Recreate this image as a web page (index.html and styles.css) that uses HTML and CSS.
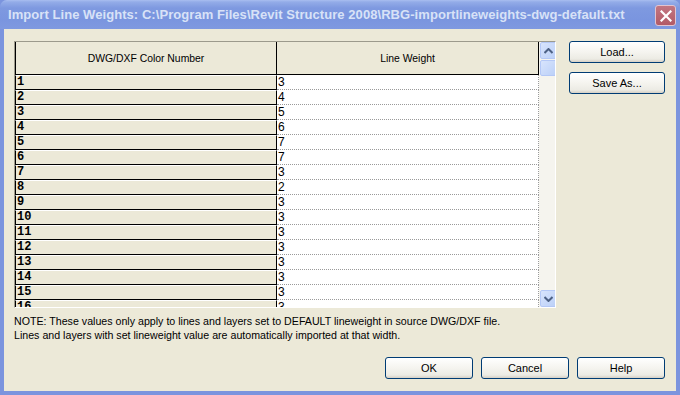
FILE: index.html
```html
<!DOCTYPE html>
<html>
<head>
<meta charset="utf-8">
<link rel="stylesheet" href="styles.css">
</head>
<body>
<div class="window">
  <div class="titlebar">
    <span class="title">Import Line Weights: C:\Program Files\Revit Structure 2008\RBG-importlineweights-dwg-default.txt</span>
    <div class="close">
      <svg width="12" height="12" viewBox="0 0 12 12"><path d="M1.5 1.5 L10.5 10.5 M10.5 1.5 L1.5 10.5" stroke="#fff" stroke-width="2.2" stroke-linecap="square"/></svg>
    </div>
  </div>
  <div class="client">
    <div class="top">
      <div class="gridbox">
        <div class="grid">
          <div class="row head">
            <div class="hcell c1">DWG/DXF Color Number</div>
            <div class="hcell c2">Line Weight</div>
          </div>
          <div class="row"><div class="lcell">1</div><div class="vcell">3</div></div>
          <div class="row"><div class="lcell">2</div><div class="vcell">4</div></div>
          <div class="row"><div class="lcell">3</div><div class="vcell">5</div></div>
          <div class="row"><div class="lcell">4</div><div class="vcell">6</div></div>
          <div class="row"><div class="lcell">5</div><div class="vcell">7</div></div>
          <div class="row"><div class="lcell">6</div><div class="vcell">7</div></div>
          <div class="row"><div class="lcell">7</div><div class="vcell">3</div></div>
          <div class="row"><div class="lcell">8</div><div class="vcell">2</div></div>
          <div class="row"><div class="lcell">9</div><div class="vcell">3</div></div>
          <div class="row"><div class="lcell">10</div><div class="vcell">3</div></div>
          <div class="row"><div class="lcell">11</div><div class="vcell">3</div></div>
          <div class="row"><div class="lcell">12</div><div class="vcell">3</div></div>
          <div class="row"><div class="lcell">13</div><div class="vcell">3</div></div>
          <div class="row"><div class="lcell">14</div><div class="vcell">3</div></div>
          <div class="row"><div class="lcell">15</div><div class="vcell">3</div></div>
          <div class="row"><div class="lcell">16</div><div class="vcell">3</div></div>
        </div>
        <div class="scrollbar">
          <div class="sbtn">
            <svg width="9" height="6" viewBox="0 0 9 6"><path d="M0.5 5 L4.5 1 L8.5 5" fill="none" stroke="#4D6185" stroke-width="2"/></svg>
          </div>
          <div class="thumb"></div>
          <div class="track"></div>
          <div class="sbtn">
            <svg width="9" height="6" viewBox="0 0 9 6"><path d="M0.5 1 L4.5 5 L8.5 1" fill="none" stroke="#4D6185" stroke-width="2"/></svg>
          </div>
        </div>
      </div>
      <div class="side">
        <div class="btn">Load...</div>
        <div class="btn">Save As...</div>
      </div>
    </div>
    <div class="note">
      <div>NOTE: These values only apply to lines and layers set to DEFAULT lineweight in source DWG/DXF file.</div>
      <div>Lines and layers with set lineweight value are automatically imported at that width.</div>
    </div>
    <div class="bottom">
      <div class="btn wide">OK</div>
      <div class="btn wide">Cancel</div>
      <div class="btn wide">Help</div>
    </div>
  </div>
</div>
</body>
</html>
```

FILE: styles.css
```css
html, body {
  margin: 0;
  padding: 0;
}
body {
  width: 680px;
  height: 395px;
  overflow: hidden;
  font-family: "Liberation Sans", Arial, sans-serif;
}
.window {
  width: 680px;
  height: 395px;
  background: #7B94DE;
  display: flex;
  flex-direction: column;
}
.titlebar {
  height: 29px;
  flex: none;
  background: linear-gradient(#A9BEF0 0px, #93ACE8 2px, #7E99E0 8px, #7A95DF 20px, #7F99E0 29px);
  display: flex;
  align-items: center;
  padding-left: 8px;
  position: relative;
  border-radius: 7px 7px 0 0;
}
.title {
  color: #D8E2F7;
  font-weight: bold;
  font-size: 13px;
  white-space: nowrap;
  letter-spacing: 0.06px;
}
.close {
  position: absolute;
  left: 655px;
  top: 5px;
  width: 19px;
  height: 19px;
  border: 1px solid #E2C4CF;
  border-radius: 3px;
  background: linear-gradient(#C27682, #B25A66);
  display: flex;
  align-items: center;
  justify-content: center;
}
.close svg { display: block; }
.client {
  flex: 1;
  margin: 0 4px 4px 4px;
  background: #ECE9D8;
  padding: 12px 11px 0 10px;
  font-size: 11px;
  color: #000;
  display: flex;
  flex-direction: column;
}
.top {
  display: flex;
  align-items: flex-start;
}
.gridbox {
  width: 542px;
  height: 265px;
  border-top: 1px solid #9C9A8C;
  border-left: 1px solid #9C9A8C;
  border-right: 1px solid #FFFFFF;
  border-bottom: 1px solid #FFFFFF;
  display: flex;
  overflow: hidden;
  background: #F5F4EE;
}
.grid {
  width: 524px;
  flex: none;
  background: #fff;
  height: 265px;
  overflow: hidden;
}
.row {
  display: flex;
  height: 15px;
}
.row.head {
  height: 33px;
  background: #ECE9D8;
  border-bottom: 1px solid #000;
  box-sizing: border-box;
}
.hcell {
  display: flex;
  align-items: center;
  justify-content: center;
  font-size: 10.4px;
  box-sizing: border-box;
}
.hcell.c1 {
  width: 262px;
  border-right: 1px solid #000;
  border-left: 1px solid #000;
}
.hcell.c2 {
  width: 262px;
  border-right: 1px solid #000;
}
.lcell {
  width: 262px;
  box-sizing: border-box;
  background: #ECE9D8;
  border-left: 1px solid #000;
  border-right: 1px solid #000;
  border-top: 1px solid #fff;
  border-bottom: 1px solid #000;
  font-family: "Liberation Mono", "Courier New", monospace;
  font-weight: bold;
  font-size: 12px;
  line-height: 13px;
  padding-left: 1px;
}
.vcell {
  width: 262px;
  box-sizing: border-box;
  border-bottom: 1px dotted #9A9A9A;
  border-right: 1px dotted #9A9A9A;
  font-size: 12px;
  line-height: 14px;
  padding-left: 1px;
  background: #fff;
}
.scrollbar {
  width: 17px;
  margin-left: 1px;
  flex: none;
  display: flex;
  flex-direction: column;
  background: #F5F4EE;
}
.sbtn, .thumb {
  width: 15px;
  height: 15px;
  border: 1px solid #B4C8F6;
  border-radius: 2px;
  background: linear-gradient(135deg, #D8E4FC, #BBD0F8);
  display: flex;
  align-items: center;
  justify-content: center;
}
.thumb {
  height: 14px;
  margin-top: 1px;
}
.track {
  flex: 1;
}
.side {
  margin-left: 13px;
  display: flex;
  flex-direction: column;
  gap: 9px;
}
.btn {
  width: 94px;
  height: 20px;
  border: 1px solid #003C74;
  border-radius: 3px;
  background: linear-gradient(#FFFFFF 0%, #F5F4EF 50%, #ECEBE4 85%, #D6D0C5 100%);
  display: flex;
  align-items: center;
  justify-content: center;
  font-size: 11px;
  color: #000;
}
.btn.wide {
  width: 86px;
}
.note {
  margin-top: 6px;
  line-height: 14px;
  font-size: 10.65px;
  padding-left: 0px;
}
.bottom {
  margin-top: 15px;
  display: flex;
  justify-content: flex-end;
  gap: 8px;
}
```
